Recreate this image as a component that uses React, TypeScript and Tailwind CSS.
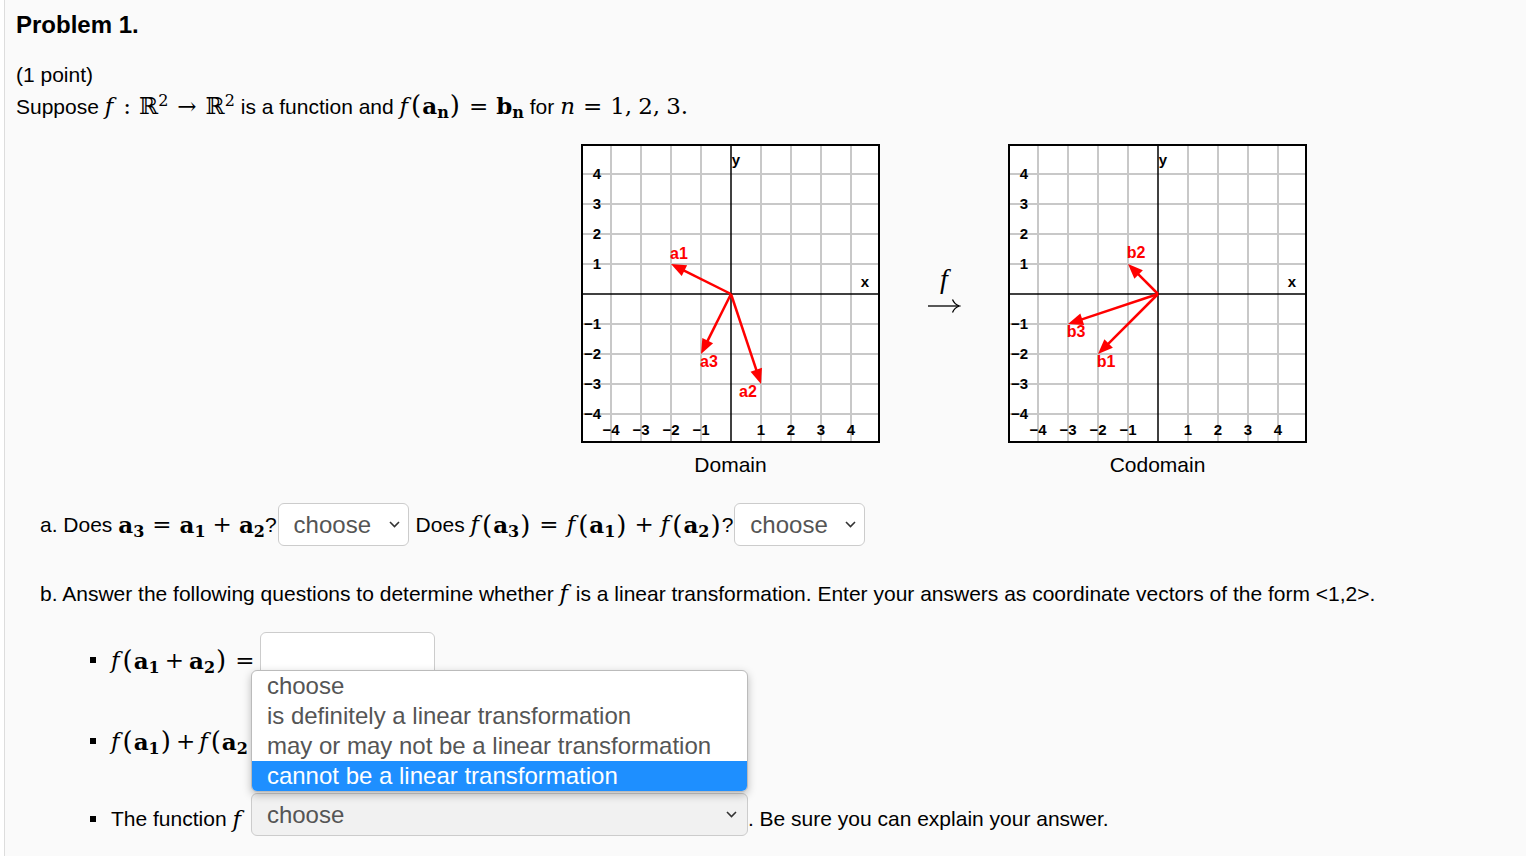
import React from 'react';

type Vec = { x: number; y: number; label: string; lx: number; ly: number };

const domainVecs: Vec[] = [
  { x: -2, y: 1, label: 'a1', lx: 98, ly: 111 },
  { x: -1, y: -2, label: 'a3', lx: 128, ly: 219 },
  { x: 1, y: -3, label: 'a2', lx: 167, ly: 249 },
];

const codomainVecs: Vec[] = [
  { x: -1, y: 1, label: 'b2', lx: 128, ly: 110 },
  { x: -3, y: -1, label: 'b3', lx: 68, ly: 189 },
  { x: -2, y: -2, label: 'b1', lx: 98, ly: 219 },
];

const grid = [30, 60, 90, 120, 180, 210, 240, 270];
const yTicks = ['4', '3', '2', '1', '−1', '−2', '−3', '−4'];
const xTicks = ['−4', '−3', '−2', '−1', '1', '2', '3', '4'];

function Arrow({ v }: { v: Vec }) {
  const tx = 150 + v.x * 30;
  const ty = 150 - v.y * 30;
  const dx = tx - 150;
  const dy = ty - 150;
  const len = Math.sqrt(dx * dx + dy * dy);
  const ux = dx / len;
  const uy = dy / len;
  const hl = 15;
  const hw = 6;
  const bx = tx - ux * hl;
  const by = ty - uy * hl;
  const pts = `${tx},${ty} ${bx - uy * hw},${by + ux * hw} ${bx + uy * hw},${by - ux * hw}`;
  return (
    <g>
      <line x1={150} y1={150} x2={bx + ux * 2} y2={by + uy * 2} stroke="#ff0000" strokeWidth={2.5} />
      <polygon points={pts} fill="#ff0000" />
      <text x={v.lx} y={v.ly} fill="#ff0000" fontSize={16} fontWeight={700} textAnchor="middle" dominantBaseline="middle" fontFamily="'Liberation Sans', Arial, sans-serif">
        {v.label}
      </text>
    </g>
  );
}

function Graph({ vecs }: { vecs: Vec[] }) {
  return (
    <svg width="299" height="299" viewBox="0 0 299 299" className="block">
      <rect x={0} y={0} width={299} height={299} fill="#ffffff" />
      {grid.map((g) => (
        <line key={'v' + g} x1={g} y1={0} x2={g} y2={299} stroke="#c8c8c8" strokeWidth={2} />
      ))}
      {grid.map((g) => (
        <line key={'h' + g} x1={0} y1={g} x2={299} y2={g} stroke="#c8c8c8" strokeWidth={2} />
      ))}
      <line x1={150} y1={0} x2={150} y2={299} stroke="#000" strokeWidth={1.5} />
      <line x1={0} y1={150} x2={299} y2={150} stroke="#000" strokeWidth={1.5} />
      <g fontFamily="'Liberation Sans', Arial, sans-serif" fontWeight={700} fontSize={15} fill="#000">
        {yTicks.map((t, i) => (
          <text key={'y' + t} x={20} y={grid[i] + 1} textAnchor="end" dominantBaseline="middle">
            {t}
          </text>
        ))}
        {xTicks.map((t, i) => (
          <text key={'x' + t} x={grid[i]} y={287} textAnchor="middle" dominantBaseline="middle">
            {t}
          </text>
        ))}
        <text x={155} y={17} textAnchor="middle" dominantBaseline="middle">y</text>
        <text x={284} y={139} textAnchor="middle" dominantBaseline="middle">x</text>
      </g>
      {vecs.map((v) => (
        <Arrow key={v.label} v={v} />
      ))}
      <rect x={1} y={1} width={297} height={297} fill="none" stroke="#000" strokeWidth={2} />
    </svg>
  );
}

function F() {
  return <i className="font-['DejaVu_Serif',serif] text-[23px] leading-none pr-[2px]">f</i>;
}

function Bv({ c, n }: { c: string; n: string }) {
  return (
    <span className="font-['DejaVu_Serif',serif] text-[23px] leading-none font-bold">
      {c}
      <sub className="text-[16px] font-bold">{n}</sub>
    </span>
  );
}

function M({ children }: { children: React.ReactNode }) {
  return <span className="font-['DejaVu_Serif',serif] text-[23px] leading-none">{children}</span>;
}

function P({ children }: { children: React.ReactNode }) {
  return <span className="font-['DejaVu_Serif',serif] text-[26px] leading-none px-[1px]">{children}</span>;
}

function Eq() {
  return <span className="mx-[8px] font-['DejaVu_Serif',serif] text-[23px] leading-none">=</span>;
}

function Plus() {
  return <span className="mx-[7px] font-['DejaVu_Serif',serif] text-[23px] leading-none">+</span>;
}

function Chevron() {
  return (
    <svg width="11" height="7" viewBox="0 0 11 7" className="shrink-0">
      <path d="M1 1 L5.5 5.5 L10 1" fill="none" stroke="#333" strokeWidth={1.6} />
    </svg>
  );
}

export default function App() {
  return (
    <div className="min-h-screen bg-white font-['Liberation_Sans',Arial,sans-serif] text-[21px] text-black">
      <div className="ml-[4px] min-h-screen border-l border-[#dddddd] bg-[#fafafa] pl-[11px] pt-[11px]">
        <h1 className="text-[24px] font-bold leading-[28px]">Problem 1.</h1>
        <p className="mt-[24px] leading-[24px]">(1 point)</p>
        <p className="mt-[4px] h-[32px] leading-[32px]">
          Suppose <F />
          <M>
            <span className="mx-[8px]">:</span>ℝ<sup className="text-[16px]">2</sup>
            <span className="mx-[9px]">→</span>ℝ<sup className="text-[16px]">2</sup>
          </M>{' '}
          is a function and <F />
          <P>(</P>
          <Bv c="a" n="n" />
          <P>)</P>
          <Eq />
          <Bv c="b" n="n" /> for{' '}
          <M>
            <i>n</i>
          </M>
          <Eq />
          <M>
            1,<span className="ml-[6px]">2,</span>
            <span className="ml-[6px]">3.</span>
          </M>
        </p>

        <div className="mt-[21px] ml-[565px] flex items-start">
          <div className="flex flex-col items-center">
            <Graph vecs={domainVecs} />
            <div className="mt-[10px] leading-[24px]">Domain</div>
          </div>
          <div className="flex w-[128px] flex-col items-center pt-[121px]">
            <i className="font-['Liberation_Serif','DejaVu_Serif',serif] text-[28px] leading-[28px]">f</i>
            <svg width="34" height="16" viewBox="0 0 34 16" className="mt-[5px]">
              <line x1={1} y1={8} x2={32} y2={8} stroke="#000" strokeWidth={1.3} />
              <path d="M25.5 1.5 Q27.5 6.5 32.5 8 Q27.5 9.5 25.5 14.5" fill="none" stroke="#000" strokeWidth={1.3} />
            </svg>
          </div>
          <div className="flex flex-col items-center">
            <Graph vecs={codomainVecs} />
            <div className="mt-[10px] leading-[24px]">Codomain</div>
          </div>
        </div>

        <div className="mt-[26px] ml-[24px] flex h-[43px] items-center">
          <span>a. Does&nbsp;</span>
          <Bv c="a" n="3" />
          <Eq />
          <Bv c="a" n="1" />
          <Plus />
          <Bv c="a" n="2" />
          <span>?</span>
          <div className="ml-[1px] flex h-[43px] w-[131px] items-center justify-between rounded-[6px] border border-[#cccccc] bg-white pl-[15px] pr-[8px] text-[24px] text-[#555555]">
            <span>choose</span>
            <Chevron />
          </div>
          <span className="ml-[7px]">Does&nbsp;</span>
          <F />
          <P>(</P>
          <Bv c="a" n="3" />
          <P>)</P>
          <Eq />
          <F />
          <P>(</P>
          <Bv c="a" n="1" />
          <P>)</P>
          <Plus />
          <F />
          <P>(</P>
          <Bv c="a" n="2" />
          <P>)</P>
          <span>?</span>
          <div className="ml-[1px] flex h-[43px] w-[131px] items-center justify-between rounded-[6px] border border-[#cccccc] bg-white pl-[15px] pr-[8px] text-[24px] text-[#555555]">
            <span>choose</span>
            <Chevron />
          </div>
        </div>

        <p className="mt-[36px] ml-[24px] leading-[24px]">
          b. Answer the following questions to determine whether <F /> is a linear transformation. Enter your answers as coordinate vectors of the form &lt;1,2&gt;.
        </p>

        <ul className="mt-[26px] ml-[74px]">
          <li className="flex h-[81px] items-start">
            <span className="mt-[14px] flex h-[28px] items-center">
              <span className="mr-[15px] h-[6px] w-[6px] bg-black" />
              <F />
              <P>(</P>
              <Bv c="a" n="1" />
              <span className="mx-[5px] font-['DejaVu_Serif',serif] text-[23px] leading-none">+</span>
              <Bv c="a" n="2" />
              <P>)</P>
              <span className="ml-[8px] mr-[6px] font-['DejaVu_Serif',serif] text-[23px] leading-none">=</span>
            </span>
            <div className="h-[44px] w-[175px] rounded-[6px] border border-[#cccccc] bg-white" />
          </li>
          <li className="flex h-[80px] items-start">
            <span className="mt-[14px] flex h-[28px] items-center whitespace-nowrap">
              <span className="mr-[15px] h-[6px] w-[6px] shrink-0 bg-black" />
              <F />
              <P>(</P>
              <Bv c="a" n="1" />
              <P>)</P>
              <span className="mx-[4px] font-['DejaVu_Serif',serif] text-[23px] leading-none">+</span>
              <F />
              <P>(</P>
              <Bv c="a" n="2" />
            </span>
          </li>
          <li className="flex items-start">
            <span className="mt-[12px] flex h-[28px] items-center">
              <span className="mr-[15px] h-[6px] w-[6px] bg-black" />
              The function&nbsp;
              <F />
            </span>
            <div className="relative ml-[8px]">
              <div className="absolute bottom-[calc(100%+1px)] left-0 w-[497px] overflow-hidden rounded-[6px] border border-[#bbbbbb] bg-white text-[24px] leading-[30px] text-[#555555] shadow-[0_3px_8px_rgba(0,0,0,0.25)]">
                <div className="pl-[15px]">choose</div>
                <div className="pl-[15px]">is definitely a linear transformation</div>
                <div className="pl-[15px]">may or may not be a linear transformation</div>
                <div className="bg-[#1e8fff] pl-[15px] text-white">cannot be a linear transformation</div>
              </div>
              <div className="flex h-[43px] w-[497px] items-center justify-between rounded-[6px] border border-[#cccccc] bg-[#f1f1f1] pl-[15px] pr-[10px] text-[24px] text-[#555555]">
                <span>choose</span>
                <Chevron />
              </div>
            </div>
            <span className="mt-[12px] leading-[28px]">. Be sure you can explain your answer.</span>
          </li>
        </ul>
      </div>
    </div>
  );
}
